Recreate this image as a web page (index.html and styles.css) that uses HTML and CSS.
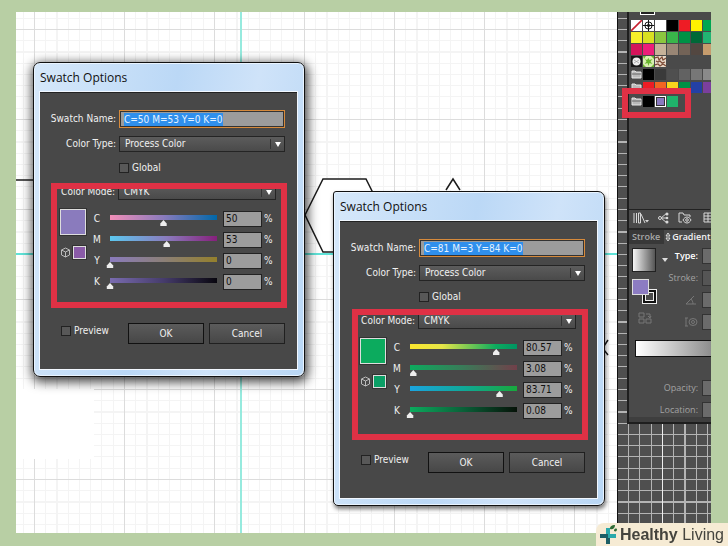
FILE: index.html
```html
<!DOCTYPE html>
<html lang="en">
<head>
<meta charset="utf-8">
<title>Swatch Options</title>
<link rel="stylesheet" href="styles.css">
</head>
<body>
<main class="stage">
  <section class="artboard">
    <svg class="drawing" aria-hidden="true">
      <path class="mask" d="M0 377h78v70H0z"/>
      <path class="guide-light" d="M225 0v900"/>
      <path class="guide" d="M0 242h900"/>
      <path class="shape" d="M0 168h18"/>
      <path class="shape" d="M289 203l18-36h43l18 36-18 37h-43z"/>
      <path class="shape" d="M430 178l7-11 7 11"/>
      <path class="shape" d="M592 328l-4 6v4l4 5"/>
    </svg>
  </section>

  <aside class="dock">
    <div class="panels">
      <section class="swatches">
        <span class="dock-tab"></span>
        <div class="row">
          <svg class="chip" viewBox="0 0 11 11"><path fill="#fff" d="M0 0h11v11H0z"/><path stroke="#c81f2e" stroke-width="1.6" d="M0 11L11 0"/></svg>
          <svg class="chip" viewBox="0 0 11 11"><path fill="#fff" d="M0 0h11v11H0z"/><g fill="none" stroke="#111"><circle cx="5.500" cy="5.500" r="3.600"/><circle cx="5.500" cy="5.500" r="1.200"/><path d="M5.500 0v11M0 5.500h11"/></g></svg>
          <i class="chip white"></i><i class="chip black"></i><i class="chip red"></i><i class="chip yellow"></i><i class="chip green"></i>
        </div>
        <div class="row">
          <i class="chip lemon"></i><i class="chip citron"></i><i class="chip lime"></i><i class="chip grass"></i><i class="chip leaf"></i><i class="chip forest"></i><i class="chip jade"></i>
        </div>
        <div class="row">
          <i class="chip crimson"></i><i class="chip magenta"></i><i class="chip sand"></i><i class="chip taupe"></i><i class="chip umber"></i><i class="chip bark"></i><i class="chip tan"></i>
        </div>
        <div class="row">
          <svg class="chip" viewBox="0 0 11 11"><path fill="#161616" d="M0 0h11v11H0z"/><circle cx="5.500" cy="5.500" r="4" fill="#eee"/><path stroke="#999" stroke-width=".7" d="M3 4l5 3M8 4L3 7"/></svg>
          <svg class="chip" viewBox="0 0 11 11"><path fill="#d9efb0" d="M0 0h11v11H0z"/><path fill="#69b52e" d="M0 0h3L1 3zM8 0h3v3zM5.500 2l1 2 3-1-2 2.500 2 2.500-3-1-1 3-1-3-3 1 2-2.500L2 3l2 1zM0 8l3 3H0zM11 8v3H8z"/></svg>
          <svg class="chip" viewBox="0 0 11 11"><path fill="#e8d9c8" d="M0 0h11v11H0z"/><path fill="none" stroke="#7d4a35" stroke-width="1.200" d="M0 2l3-1 1 3 3-3 1 3 3-2M1 5l2 1 2-1 2 2 3-1M0 9l3-1 2 2 3-2 3 2"/></svg>
        </div>
        <div class="row group">
          <svg class="folder" viewBox="0 0 11 11"><path d="M1 2h3l1 1h5v6H1z"/><path class="fold" d="M1 5h9"/></svg>
          <i class="chip black"></i><i class="chip gray-1"></i><i class="chip gray-2"></i><i class="chip gray-3"></i><i class="chip gray-4"></i><i class="chip gray-5"></i>
        </div>
        <div class="row group">
          <svg class="folder" viewBox="0 0 11 11"><path d="M1 2h3l1 1h5v6H1z"/></svg>
          <i class="chip red"></i><i class="chip orange"></i><i class="chip gold"></i><i class="chip leaf"></i><i class="chip blue"></i><i class="chip violet"></i>
        </div>
        <div class="row group last">
          <svg class="folder" viewBox="0 0 11 11"><path d="M1 2h3l1 1h5v6H1z"/><path class="fold" d="M1 5h9"/></svg>
          <i class="chip black"></i><i class="chip lavender picked"></i><i class="chip emerald"></i>
        </div>
        <div class="marker dock-marker"></div>
      </section>
      <div class="tools">
        <svg class="tool" viewBox="0 0 16 12"><path d="M1 1v10M3.500 1v10M5.500 1h2v10h-2zM8 2l4 9"/><path class="solid" d="M12 8h4l-2 2.500z"/></svg>
        <svg class="tool" viewBox="0 0 16 12"><path d="M12 1L6 6l6 5M6 6h6"/><circle cx="5" cy="6" r="1.500"/><circle class="solid" cx="12" cy="2" r="1.500"/><circle class="solid" cx="12" cy="6" r="1.300"/><circle class="solid" cx="12" cy="10" r="1.500"/></svg>
        <svg class="tool" viewBox="0 0 16 12"><path d="M5 10H2V1h4l1 2h6v2M6 8c2-4 6-4 8 0-2 4-6 4-8 0z"/><circle cx="10" cy="8" r="1.300"/></svg>
        <svg class="tool" viewBox="0 0 16 12"><path d="M5 1h12v9H5zM5 4h12M5 7h12M9 1v9"/></svg>
      </div>
      <nav class="tabs">
        <a class="tab" href="#stroke">Stroke</a>
        <a class="tab active" href="#gradient"><svg class="updown" viewBox="0 0 6 10"><path d="M1 4l2-3 2 3zM1 6l2 3 2-3z"/></svg>Gradient</a>
      </nav>
      <section class="gradient" id="gradient">
        <div class="settings">
          <div class="previews">
            <span class="ramp-thumb"></span>
            <svg class="caret" viewBox="0 0 6 4"><path d="M0 0h6L3 4z"/></svg>
            <span class="paint"><i class="stroke-paint"></i><i class="fill-paint"></i></span>
            <svg class="reverse" viewBox="0 0 14 12"><path d="M1 1h5v4H1zM8 7h5v4H8zM1 7h5v4H1zM8 2h4v3M10 4l2 2 1-2"/></svg>
          </div>
          <div class="fields">
            <div class="field on"><span>Type:</span><i class="box"></i></div>
            <div class="field"><span>Stroke:</span><i class="box dim"></i></div>
            <div class="field"><svg class="glyph" viewBox="0 0 14 12"><path d="M2 10h10M2 10l8-8M9 10c0-2-1-4-2-5"/></svg><i class="box"></i></div>
            <div class="field"><svg class="glyph" viewBox="0 0 14 12"><path d="M1 2h3M1 10h3M2 2v8"/><ellipse cx="9" cy="6" rx="4" ry="3.500"/><circle cx="9" cy="6" r="1.500"/></svg><i class="box"></i></div>
          </div>
        </div>
        <div class="ramp"></div>
        <div class="fields">
          <div class="field"><span>Opacity:</span><i class="box"></i></div>
          <div class="field"><span>Location:</span><i class="box"></i></div>
        </div>
      </section>
    </div>
  </aside>

  <form class="dialog first">
    <h2 class="title">Swatch Options</h2>
    <div class="body">
      <div class="line"><label for="name1">Swatch Name:</label><span class="textbox"><input id="name1" type="text" value="C=50 M=53 Y=0 K=0"></span></div>
      <div class="line"><label for="type1">Color Type:</label><span class="drop"><select id="type1"><option>Process Color</option></select></span></div>
      <div class="line"><span></span><span class="tick"><input id="global1" type="checkbox"><label for="global1">Global</label></span></div>
      <div class="line mode"><label for="mode1">Color Mode:</label><span class="drop"><select id="mode1"><option>CMYK</option></select></span></div>
      <div class="mixer">
        <div class="samples">
          <i class="sample purple"></i>
          <svg class="cube" viewBox="0 0 11 11"><path d="M5.500 1l4 2v5l-4 2-4-2V3zM1.500 3l4 2 4-2M5.500 5v5"/></svg>
          <i class="sample small plum"></i>
        </div>
        <div class="channels">
          <div class="channel"><label for="c1">C</label><input class="slide p-c" id="c1" type="range" step="0.01" value="50"><input class="amount" aria-label="C percent" value="50"><span>%</span></div>
          <div class="channel"><label for="m1">M</label><input class="slide p-m" id="m1" type="range" step="0.01" value="53"><input class="amount" aria-label="M percent" value="53"><span>%</span></div>
          <div class="channel"><label for="y1">Y</label><input class="slide p-y" id="y1" type="range" step="0.01" value="0"><input class="amount" aria-label="Y percent" value="0"><span>%</span></div>
          <div class="channel"><label for="k1">K</label><input class="slide p-k" id="k1" type="range" step="0.01" value="0"><input class="amount" aria-label="K percent" value="0"><span>%</span></div>
        </div>
      </div>
      <div class="actions">
        <span class="tick"><input id="preview1" type="checkbox"><label for="preview1">Preview</label></span>
        <button class="ok" type="button">OK</button>
        <button type="button">Cancel</button>
      </div>
      <div class="marker"></div>
    </div>
  </form>

  <form class="dialog second">
    <h2 class="title">Swatch Options</h2>
    <div class="body">
      <div class="line"><label for="name2">Swatch Name:</label><span class="textbox"><input id="name2" type="text" value="C=81 M=3 Y=84 K=0"></span></div>
      <div class="line"><label for="type2">Color Type:</label><span class="drop"><select id="type2"><option>Process Color</option></select></span></div>
      <div class="line"><span></span><span class="tick"><input id="global2" type="checkbox"><label for="global2">Global</label></span></div>
      <div class="line mode"><label for="mode2">Color Mode:</label><span class="drop"><select id="mode2"><option>CMYK</option></select></span></div>
      <div class="mixer">
        <div class="samples">
          <i class="sample green-fill"></i>
          <svg class="cube" viewBox="0 0 11 11"><path d="M5.500 1l4 2v5l-4 2-4-2V3zM1.500 3l4 2 4-2M5.500 5v5"/></svg>
          <i class="sample small green-safe"></i>
        </div>
        <div class="channels">
          <div class="channel"><label for="c2">C</label><input class="slide g-c" id="c2" type="range" step="0.01" value="80.57"><input class="amount" aria-label="C percent" value="80.57"><span>%</span></div>
          <div class="channel"><label for="m2">M</label><input class="slide g-m" id="m2" type="range" step="0.01" value="3.08"><input class="amount" aria-label="M percent" value="3.08"><span>%</span></div>
          <div class="channel"><label for="y2">Y</label><input class="slide g-y" id="y2" type="range" step="0.01" value="83.71"><input class="amount" aria-label="Y percent" value="83.71"><span>%</span></div>
          <div class="channel"><label for="k2">K</label><input class="slide g-k" id="k2" type="range" step="0.01" value="0.08"><input class="amount" aria-label="K percent" value="0.08"><span>%</span></div>
        </div>
      </div>
      <div class="actions">
        <span class="tick"><input id="preview2" type="checkbox"><label for="preview2">Preview</label></span>
        <button class="ok" type="button">OK</button>
        <button type="button">Cancel</button>
      </div>
      <div class="marker"></div>
    </div>
  </form>
</main>

<div class="brand">
  <svg class="logo" viewBox="0 0 22 22"><path fill="#2aa9ab" d="M9 4h4v16H9zM3 10h16v4H3z"/><path fill="#1d5f66" d="M3 10h8v4H3zM9 14h4v6H9z"/><path fill="#2f6b35" d="M13 5c0-3 2-4 5-4 0 3-2 5-5 4zM17 7c0-2 1-3 3-2 0 2-1 3-3 2z"/></svg>
  <span><b>Healthy</b> Living</span>
</div>
</body>
</html>
```
FILE: styles.css
```css
* { box-sizing: border-box; }

body {
  margin: 0;
  min-height: 100vh;
  padding: 12px 17px 13px 16px;
  display: flex;
  background: #b8cfa4;
  color: #f0f0f0;
  font: 10px/16px "DejaVu Sans Condensed", "Noto Sans", sans-serif;
}

i { font-style: normal; }

.stage {
  position: relative;
  flex: 1;
  display: flex;
  overflow: hidden;
}

/* Artboard */
.artboard {
  position: relative;
  flex: 1;
  background:
    linear-gradient(90deg, #dcdcdc 1px, transparent 1px) 18px 0 / 90px 90px,
    linear-gradient(#dcdcdc 1px, transparent 1px) 0 17px / 90px 90px,
    repeating-linear-gradient(90deg, #f4f4f4 0 1px, transparent 1px 12.5%) 18px 0 / 90px 90px,
    repeating-linear-gradient(#f4f4f4 0 1px, transparent 1px 12.5%) 0 17px / 90px 90px,
    #fff;
}

.drawing {
  position: absolute;
  inset: 0;
  width: 100%;
  height: 100%;
}

.mask { fill: #fff; }
.guide, .guide-light { stroke: #5fe3d8; stroke-width: 2; }
.guide-light { stroke: #96eade; }
.shape { fill: #fff; stroke: #1c1c1c; stroke-width: 1.5; }

/* Dock */
.dock {
  width: 94px;
  padding-left: 9px;
  border-left: 1px solid #111;
  background:
    linear-gradient(90deg, #ededed 1px, transparent 1px) 44px 0 / 90px 90px,
    repeating-linear-gradient(90deg, #b4b4b4 0 1px, transparent 1px 12.5%) 44px 0 / 90px 90px,
    repeating-linear-gradient(#b4b4b4 0 1px, transparent 1px 12.5%) 0 17px / 90px 90px,
    #4f4f4f;
}

.panels {
  border-left: 2px solid #1e1e1e;
  background: #4a4a4a;
}

.swatches {
  position: relative;
  height: 198px;
  margin-right: 1px;
  padding: 8px 0 0 2px;
  border-bottom: 1px solid #222;
}

.dock-tab {
  position: absolute;
  top: 0;
  left: 11px;
  width: 15px;
  height: 3px;
  border: solid #fff;
  border-width: 0 1px 1px;
  background: #222;
}

.row { display: flex; gap: 1px; height: 11px; margin-bottom: 1px; }
.row.group { margin: 2px 0; }
.row.last { margin-top: 3px; }

.chip, .folder { flex: none; width: 11px; height: 11px; }
.folder { fill: #b9b9b9; stroke: #e6e6e6; }
.fold { stroke: #666; }

.white { background: #fff; }
.black { background: #000; }
.red { background: #ee1c25; }
.yellow { background: #fff200; }
.green { background: #00a651; }
.lemon { background: #f7ee2a; }
.citron { background: #d9e021; }
.lime { background: #8cc63f; }
.grass { background: #39b54a; }
.leaf { background: #009245; }
.forest { background: #006837; }
.jade { background: #22b573; }
.crimson { background: #d4145a; }
.magenta { background: #ed1e79; }
.sand { background: #c7b299; }
.taupe { background: #998675; }
.umber { background: #736357; }
.bark { background: #534741; }
.tan { background: #c69c6d; }
.gray-1 { background: #3a3a3a; }
.gray-2 { background: #4f4f4f; }
.gray-3 { background: #626262; }
.gray-4 { background: #777; }
.gray-5 { background: #8a8a8a; }
.orange { background: #f26522; }
.gold { background: #f7d51d; }
.blue { background: #2440a4; }
.violet { background: #7b3f9d; }
.lavender { background: #8a7ac0; }
.emerald { background: #1fb36b; }
.picked { border: 1px solid #fff; box-shadow: inset 0 0 0 1px #333; }

.marker { position: absolute; border: 6px solid #df3145; pointer-events: none; }

.tools {
  display: flex;
  gap: 6px;
  height: 18px;
  padding: 2px 0 0 4px;
  overflow: hidden;
}

.tool { flex: none; width: 16px; height: 12px; fill: none; stroke: #d8d8d8; }
.solid { fill: #d8d8d8; stroke: none; }

.tabs {
  display: flex;
  height: 16px;
  border-top: 2px solid #282828;
  background: #4a4a4a;
}

.tab {
  flex: none;
  display: flex;
  align-items: center;
  padding: 0 4px 0 3px;
  background: #383838;
  color: #a8a8a8;
  font: 600 9px/14px "Open Sans", "Noto Sans", sans-serif;
  text-decoration: none;
}

.tab.active { padding: 0 0 0 1px; background: #4a4a4a; color: #f2f2f2; }
.updown { width: 6px; height: 10px; margin-right: 1px; fill: none; stroke: #ddd; }

.gradient { padding: 4px 0 4px 3px; border-bottom: 2px solid #1e1e1e; box-shadow: inset 0 -5px 0 #3e3e3e; }

.settings { display: flex; justify-content: space-between; }

.previews {
  display: grid;
  grid-template-columns: 24px 6px;
  grid-template-rows: 24px 26px 12px;
  gap: 7px 6px;
  align-items: start;
}

.ramp-thumb {
  height: 24px;
  border: 1px solid #222;
  background: linear-gradient(90deg, #f5f5f5, #555);
}

.caret { width: 6px; height: 4px; align-self: center; fill: #ddd; }

.paint { display: grid; grid-column: 1 / -1; width: 25px; height: 25px; }
.paint i { grid-area: 1 / 1; }
.fill-paint { width: 17px; height: 16px; border: 1px solid #ddd; background: #8c7cc2; }
.stroke-paint {
  width: 15px;
  height: 15px;
  place-self: end;
  border: 1px solid #eee;
  background: #4a4a4a;
  box-shadow: inset 0 0 0 2px #111, inset 0 0 0 3px #eee;
}

.reverse { grid-column: 1 / -1; width: 14px; height: 12px; margin-left: 6px; fill: none; stroke: #777; }

.fields { display: flex; flex-direction: column; gap: 6px; }

.field {
  display: flex;
  align-items: center;
  justify-content: flex-end;
  gap: 4px;
  height: 16px;
  color: #a2a2a2;
  font: 9px/16px "Open Sans", "Noto Sans", sans-serif;
}

.field.on { color: #fff; font-weight: 600; }
.box { width: 9px; height: 16px; border: 1px solid #333; border-right: 0; background: #6b6b6b; }
.dim { background: #555; }
.glyph { width: 14px; height: 12px; fill: none; stroke: #777; }

.ramp {
  height: 17px;
  margin: 10px 0 23px 3px;
  border: 1px solid #111;
  border-right: 0;
  background: linear-gradient(90deg, #fff, #8e8e8e);
}

.dock-marker { left: -7px; top: 76px; width: 69px; height: 30px; }

/* Dialogs */
.dialog {
  position: absolute;
  width: 272px;
  padding: 0 6px 6px 5px;
  border: 1px solid #111;
  border-radius: 7px;
  background: linear-gradient(100deg, #d6e8fa, #bbd8f6 45%, #cfe3f9 70%, #b9d7f5);
}

.first { left: 17px; top: 50px; box-shadow: inset 0 0 0 1px #e9f4ff, 1px 3px 11px 2px #000b; }
.second { left: 317px; top: 179px; box-shadow: inset 0 0 0 1px #e9f4ff, 1px 3px 4px #0008; border-radius: 3px 7px 7px 5px; }

.title {
  margin: 0;
  height: 28px;
  padding-left: 1px;
  color: #111;
  font: 12px/30px "Open Sans", "Noto Sans", sans-serif;
}

.body {
  position: relative;
  display: flex;
  flex-direction: column;
  gap: 8px;
  height: 279px;
  padding: 18px 12px 0 0;
  border: 1px solid #f2f8ff;
  background: #484848;
  box-shadow: inset 0 1px 0 #222;
}

.line {
  display: grid;
  grid-template-columns: 76px 1fr;
  gap: 3px;
  align-items: center;
  height: 16px;
}

.line:first-child { height: 18px; }
.line > label { text-align: right; white-space: nowrap; }
.mode { grid-template-columns: 75px 1fr; padding-right: 9px; }

.textbox {
  display: flex;
  align-items: center;
  height: 18px;
  padding: 0 4px;
  border: 1px solid #d68a3c;
  background: #9c9c9c;
  box-shadow: inset 0 0 0 1px #333;
}

.textbox input {
  field-sizing: content;
  height: 13px;
  padding: 0;
  border: 0;
  background: #2f8fec;
  color: #e4f2ff;
  font: inherit;
  line-height: 13px;
}

.drop { position: relative; display: block; height: 16px; }

.drop select {
  display: block;
  appearance: none;
  width: 100%;
  height: 16px;
  padding: 0 0 0 5px;
  border: 1px solid #242424;
  border-radius: 0;
  background: linear-gradient(#5c5c5c, #4a4a4a);
  color: #f0f0f0;
  font: inherit;
  line-height: 14px;
}

.drop::before {
  content: "";
  position: absolute;
  top: 3px;
  right: 14px;
  height: 10px;
  border-left: 1px solid #333;
  pointer-events: none;
}

.drop::after {
  content: "";
  position: absolute;
  top: 6px;
  right: 4px;
  border: solid transparent;
  border-width: 5px 3px 0;
  border-top-color: #fff;
  pointer-events: none;
}

.tick { display: flex; align-items: center; gap: 3px; }

.tick input {
  appearance: none;
  width: 10px;
  height: 10px;
  margin: 0;
  border: 1px solid #222;
  background: #585858;
}

.mixer { display: flex; gap: 2px; padding-left: 20px; }

.samples {
  display: grid;
  grid-template-columns: 11px 13px;
  gap: 11px 2px;
  align-content: start;
  padding-top: 1px;
}

.sample { grid-column: 1 / -1; height: 26px; border: 1px solid #ddd; outline: 1px solid #333; outline-offset: 0; }
.small { grid-column: auto; height: 13px; }
.cube { width: 11px; height: 11px; align-self: center; fill: none; stroke: #bbb; }
.purple { background: #8a7bbd; }
.plum { background: #8a5ba8; }
.green-fill { background: #0cab5e; }
.green-safe { background: #0a9f66; }

.channels { display: flex; flex-direction: column; }
.channel { display: flex; align-items: center; height: 21px; }
.channel label { width: 18px; text-align: center; }
.channel span { margin-left: 2px; }

.amount {
  width: 39px;
  height: 16px;
  padding: 0 2px;
  border: 1px solid #222;
  background: #9c9c9c;
  color: #111;
  font: inherit;
}

.slide {
  --ramp: #888, #888;
  appearance: none;
  width: 115px;
  height: 21px;
  margin: 0 2px 0 0;
  background: linear-gradient(90deg, var(--ramp)) 4px 7px / 107px 5px no-repeat;
}

.slide::-webkit-slider-runnable-track { height: 21px; }

.slide::-webkit-slider-thumb {
  appearance: none;
  width: 8px;
  height: 6px;
  margin-top: 12px;
  background: #eee;
  clip-path: polygon(50% 0, 90% 60%, 90% 100%, 10% 100%, 10% 60%);
}

.p-c { --ramp: #f28fb8, #8a7bbd 50%, #0067a8; }
.p-m { --ramp: #5cc8f0, #8a7bbd 53%, #86207c; }
.p-y { --ramp: #8a7bbd, #8c8078 50%, #94802c; }
.p-k { --ramp: #7a6cb0, #463c6c 50%, #08060e; }
.g-c { --ramp: #fbe72e, #e6e548 30%, #0cab5e 80%, #009462; }
.g-m { --ramp: #0cab5e, #3a7a58 50%, #71404a; }
.g-y { --ramp: #1ba4e0, #10a898 50%, #18a83c; }
.g-k { --ramp: #0cab5e, #0a6038 50%, #061208; }

.actions {
  display: flex;
  align-items: flex-start;
  gap: 5px;
  margin-top: 23px;
  padding-left: 21px;
}

.actions .tick { flex: 1; }

.actions button {
  width: 76px;
  height: 21px;
  padding: 0;
  border: 1px solid #202020;
  border-radius: 0;
  background: linear-gradient(#5b5b5b, #474747);
  color: #f0f0f0;
  font: inherit;
}

.actions .ok { border-color: #111; }

.first .marker { left: 11px; top: 91px; width: 236px; height: 125px; }
.second .marker { left: 12px; top: 88px; width: 236px; height: 131px; }

/* Brand badge */
.brand {
  position: fixed;
  right: 0;
  bottom: 0;
  display: flex;
  align-items: center;
  gap: 1px;
  height: 23px;
  padding: 0 4px 0 1px;
  border-radius: 8px 0 0 0;
  background: #f6ebd4;
  color: #45443e;
  font: 16px/23px "Liberation Sans", Arial, sans-serif;
}

.logo { width: 22px; height: 22px; }
```
